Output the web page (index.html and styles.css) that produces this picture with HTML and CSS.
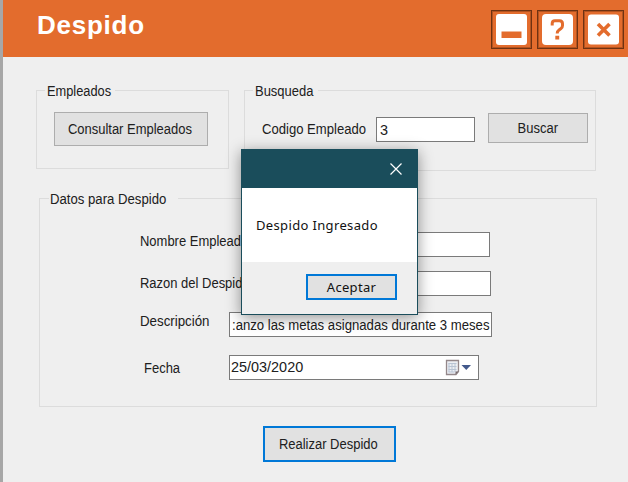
FILE: index.html
```html
<!DOCTYPE html>
<html lang="es">
<head>
<meta charset="utf-8">
<title>Despido</title>
<link rel="stylesheet" href="styles.css">
</head>
<body>
<div class="window">
  <header class="titlebar">
    <h1>Despido</h1>
    <div class="controls">
      <button class="control" aria-label="Minimizar"><svg width="31" height="31" viewBox="0 0 31 31"><rect width="31" height="31" rx="3" fill="#fff"/><path d="M5.500 17.500h20v6.500h-20z" fill="#e36c2d"/></svg></button>
      <button class="control" aria-label="Ayuda"><svg width="31" height="31" viewBox="0 0 31 31"><rect width="31" height="31" rx="4" fill="#fff"/><path d="M10.200 11.500V9.500q0-2.800 2.800-2.800h4.500q3 0 3 3v1.800q0 2-1.500 3l-2 1.500q-1.800 1.200-1.800 3.600" fill="none" stroke="#e36c2d" stroke-width="3"/><path d="M13.300 21.800h3.900v3.600h-3.900z" fill="#e36c2d"/></svg></button>
      <button class="control" aria-label="Cerrar"><svg width="31" height="31" viewBox="0 0 31 31"><rect width="31" height="30" y=".5" rx="3" fill="#fff"/><path d="M10 10l11.500 11.500m0-11.500l-11.500 11.500" fill="none" stroke="#e36c2d" stroke-width="3.600"/></svg></button>
    </div>
  </header>
  <main>
    <div class="top">
      <section class="group employees">
        <h2><span class="t">Empleados</span></h2>
        <button class="btn consult"><span class="t">Consultar Empleados</span></button>
      </section>
      <section class="group search">
        <h2><span class="t">Busqueda</span></h2>
        <label><span class="t">Codigo Empleado</span></label>
        <div class="field code"><span class="t">3</span></div>
        <button class="btn find"><span class="t">Buscar</span></button>
      </section>
    </div>
    <section class="group data">
      <h2><span class="t">Datos para Despido</span></h2>
      <div class="row name"><label><span class="t">Nombre Empleado</span></label><div class="field"></div></div>
      <div class="row reason"><label><span class="t">Razon del Despido</span></label><div class="field"></div></div>
      <div class="row description"><label><span class="t">Descripción</span></label><div class="field"><span class="t">:anzo las metas asignadas durante 3 meses</span></div></div>
      <div class="row date"><label><span class="t">Fecha</span></label><div class="field"><span class="t">25/03/2020</span>
        <svg class="calendar" width="27" height="17" viewBox="0 0 27 17"><path d="M1.500 1.500h12v11l-2.500 3h-9.500z" fill="#eceef3" stroke="#94878a" stroke-width="1.300"/><path d="M3.500 4.500h8m-8 3h8m-8 3h8m-8 2.500h6M4 4v9m3-9v9m3-9v9" stroke="#b9c4d4" stroke-width="1" fill="none"/><path d="M10.500 15.500v-3h3z" fill="#75696c"/><path d="M16.500 6h9.500l-4.750 5z" fill="#43598b"/></svg>
      </div></div>
    </section>
    <button class="btn primary submit"><span class="t">Realizar Despido</span></button>
  </main>
  <div class="dialog" role="dialog">
    <div class="dialog-bar"><svg width="12" height="12" viewBox="0 0 12 12"><path d="M.5.5l11 11m0-11l-11 11" stroke="#fff" stroke-width="1.200"/></svg></div>
    <div class="dialog-body">Despido Ingresado</div>
    <div class="dialog-foot"><button class="btn primary accept">Aceptar</button></div>
  </div>
</div>
</body>
</html>
```
FILE: styles.css
```css
* { box-sizing: border-box; }
body { margin: 0; font: 14px/16px "Liberation Sans", Arial, sans-serif; color: #202020; }
button { font: inherit; color: inherit; padding: 0; }
h1, h2 { margin: 0; }
.window { position: relative; width: 628px; height: 482px; overflow: hidden; background: #efefef; border-left: 3px solid #a7a7a7; }
.titlebar { height: 57px; display: flex; justify-content: space-between; padding: 10px 4px 0 34px; background: #e36c2d; }
.titlebar h1 { font-size: 26px; line-height: 30px; letter-spacing: .75px; color: #fff; }
.controls { display: flex; gap: 5px; }
.control { width: 41px; height: 39px; display: grid; place-items: center; border: 1px solid #6e3212; box-shadow: inset 0 0 0 1px #b3531f; background: none; }
.control svg { display: block; }
.t { display: inline-block; white-space: nowrap; transform: scaleX(.927); transform-origin: 0 50%; }
.btn .t { transform-origin: 50% 50%; position: relative; left: -1.500px; }
main { padding: 33px 32px 0 33px; }
.top { display: flex; gap: 15px; align-items: flex-start; }
.group { border: 1px solid #dcdcdc; position: relative; }
.group h2 { position: absolute; top: -8px; left: 8px; padding: 0 0 0 2px; height: 16px; background: #efefef; font-size: 14px; line-height: 16px; font-weight: normal; }
.employees { width: 193px; height: 79px; padding: 21px 0 0 17px; }
.employees h2 { width: 70px; }
.employees h2 .t { transform: scaleX(.915); }
.search { width: 353px; height: 81px; display: flex; align-items: flex-start; padding: 22px 0 0 17px; }
.search h2 { width: 65px; }
.search label { width: 114px; padding-top: 8px; }
.search label .t { transform: scaleX(.935); }
.btn { display: flex; align-items: center; justify-content: center; background: #e1e1e1; border: 1px solid #adadad; white-space: nowrap; }
.consult { width: 154px; height: 34px; }
.find { width: 100px; height: 30px; margin-left: 13px; }
.find .t { left: 0; }
.field { height: 25px; background: #fff; border: 1px solid #7a7a7a; padding: 4px 0 0 3px; }
.code { width: 99px; margin-top: 4px; }
.code .t { transform: scaleX(1.03); }
.data { width: 558px; height: 209px; margin: 27px 0 0 3px; padding: 33px 0 0 100px; }
.data h2 { width: 129px; left: 9px; }
.data h2 .t { transform: translateX(-1px) scaleX(.94); }
.row { display: flex; height: 25px; }
.row label { width: 89px; white-space: nowrap; }
.row .field { width: 262px; }
.name label, .reason label { width: 110px; }
.name label { padding-top: 1px; }
.row.name .field { width: 240px; }
.reason { margin-top: 14px; }
.reason label { padding-top: 4px; }
.row.reason .field { width: 241px; }
.description { margin-top: 16px; }
.row.description .field { width: 263px; padding-left: 2px; }
.description label { padding-top: 1px; }
.description label .t { transform: scaleX(.95); }
.description .field .t { transform: scaleX(.94); }
.date { margin-top: 18px; }
.date label { padding: 5px 0 0 4px; }
.row.date .field { width: 250px; display: flex; justify-content: space-between; padding: 3px 6px 0 1px; }
.date .field .t { transform: scaleX(1.03); }
.primary { border: 2px solid #0078d7; }
.submit { width: 133px; height: 36px; margin: 19px 0 0 227px; }
.dialog { position: absolute; left: 238px; top: 149px; width: 177px; height: 166px; border: 1px solid #1a4d5b; background: #fff; box-shadow: 0 3px 14px rgba(0,0,0,.42); font: 13px/18px "Noto Sans", "Open Sans", sans-serif; color: #111; }
.dialog-bar { height: 38px; display: flex; justify-content: flex-end; padding: 13px 15px 0 0; background: #1a4d5b; }
.dialog-body { height: 74px; padding: 28px 0 0 14px; letter-spacing: .35px; white-space: nowrap; }
.dialog-foot { height: 52px; background: #efefef; padding: 12px 0 0 64px; }
.accept { width: 91px; height: 26px; letter-spacing: .3px; }
```
